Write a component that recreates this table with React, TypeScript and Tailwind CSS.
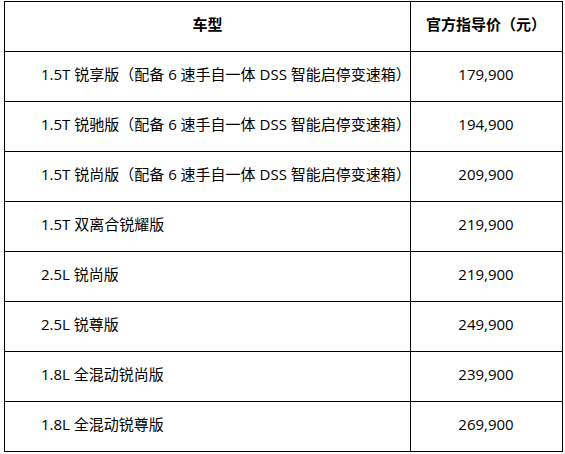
const rows: [string, string][] = [
  ['1.5T 锐享版（配备 6 速手自一体 DSS 智能启停变速箱）', '179,900'],
  ['1.5T 锐驰版（配备 6 速手自一体 DSS 智能启停变速箱）', '194,900'],
  ['1.5T 锐尚版（配备 6 速手自一体 DSS 智能启停变速箱）', '209,900'],
  ['1.5T 双离合锐耀版', '219,900'],
  ['2.5L 锐尚版', '219,900'],
  ['2.5L 锐尊版', '249,900'],
  ['1.8L 全混动锐尚版', '239,900'],
  ['1.8L 全混动锐尊版', '269,900'],
]

export default function App() {
  return (
    <div className="w-[565px] h-[454px] bg-white pt-[1px] pl-[4px] text-[15px] text-black font-['Open_Sans','Noto_Sans_CJK_SC',sans-serif]">
      <div className="w-[559px] border border-black">
        <div className="flex h-[49px] items-center font-bold">
          <div className="w-[406px] h-full border-r border-black flex items-center justify-center pb-[4px]">车型</div>
          <div className="w-[150px] h-full flex items-center justify-center pb-[4px]">官方指导价（元）</div>
        </div>
        {rows.map(([name, price]) => (
          <div key={name + price} className="flex h-[50px] border-t border-black">
            <div className="w-[406px] h-full border-r border-black flex items-center pl-[36px] pb-[4px] whitespace-nowrap">{name}</div>
            <div className="w-[150px] h-full flex items-center justify-center pb-[4px]">{price}</div>
          </div>
        ))}
      </div>
    </div>
  )
}
